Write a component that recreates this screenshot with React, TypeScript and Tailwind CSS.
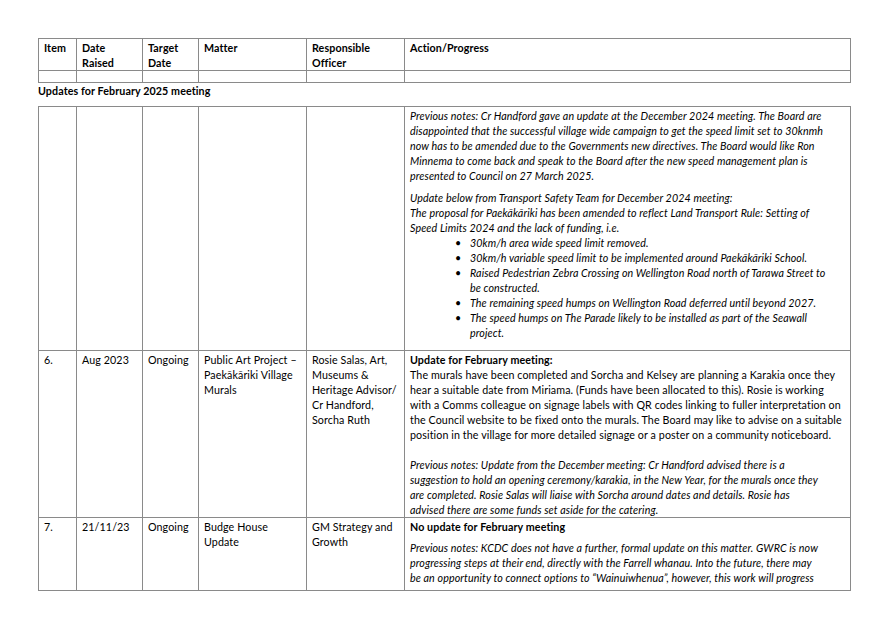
import React from "react";

const cols = ["w-[38px]", "w-[66px]", "w-[56px]", "w-[108px]", "w-[98px]", "w-[446px]"];
const td = "border border-[#8a8a8a] align-top px-[5px] pt-[1px]";

function L({ lines }: { lines: string[] }) {
  return <>{lines.map((l, i) => <React.Fragment key={i}>{i > 0 && <br />}{l}</React.Fragment>)}</>;
}

function Bullets({ items }: { items: string[][] }) {
  return (
    <ul className="pl-[60px]">
      {items.map((t, i) => (
        <li key={i} className="relative">
          <span className="absolute left-[-15px] not-italic">•</span>
          <L lines={t} />
        </li>
      ))}
    </ul>
  );
}

export default function App() {
  return (
    <div className="bg-white w-[887px] h-[626px] overflow-hidden text-black text-[10.7px] leading-[15px] tracking-[0.1px]" style={{ fontFamily: "Lato, 'Open Sans', sans-serif" }}>
      <div className="pl-[38px] pt-[38px]">
        <table className="table-fixed border-collapse w-[812px]">
          <colgroup>{cols.map((c, i) => <col key={i} className={c} />)}</colgroup>
          <tbody className="font-bold">
            <tr className="h-[30px]">
              <td className={td}>Item</td>
              <td className={td}>Date<br />Raised</td>
              <td className={td}>Target<br />Date</td>
              <td className={td}>Matter</td>
              <td className={td}>Responsible<br />Officer</td>
              <td className={td}>Action/Progress</td>
            </tr>
            <tr className="h-[12px]">
              {cols.map((_, i) => <td key={i} className="border border-[#8a8a8a]"></td>)}
            </tr>
          </tbody>
        </table>
        <div className="font-bold h-[23px] leading-[16px]">Updates for February 2025 meeting</div>
        <table className="table-fixed border-collapse w-[812px]">
          <colgroup>{cols.map((c, i) => <col key={i} className={c} />)}</colgroup>
          <tbody>
            <tr className="h-[244px]">
              <td className={td}></td><td className={td}></td><td className={td}></td><td className={td}></td><td className={td}></td>
              <td className={td + " italic"}>
                <p><L lines={[
                  "Previous notes: Cr Handford gave an update at the December 2024 meeting. The Board are",
                  "disappointed that the successful village wide campaign to get the speed limit set to 30knmh",
                  "now has to be amended due to the Governments new directives. The Board would like Ron",
                  "Minnema to come back and speak to the Board after the new speed management plan is",
                  "presented to Council on 27 March 2025.",
                ]} /></p>
                <p className="mt-[7px]"><L lines={[
                  "Update below from Transport Safety Team for December 2024 meeting:",
                  "The proposal for Paekākāriki  has been amended to reflect Land Transport Rule: Setting of",
                  "Speed Limits 2024 and the lack of funding, i.e.",
                ]} /></p>
                <Bullets items={[
                  ["30km/h area wide speed limit removed."],
                  ["30km/h variable speed limit to be implemented around Paekākāriki School."],
                  ["Raised Pedestrian Zebra Crossing on Wellington Road north of Tarawa Street to", "be constructed."],
                  ["The remaining speed humps on Wellington Road deferred until beyond 2027."],
                  ["The speed humps on The Parade likely to be installed as part of the Seawall", "project."],
                ]} />
              </td>
            </tr>
            <tr className="h-[167px]">
              <td className={td}>6.</td>
              <td className={td}>Aug 2023</td>
              <td className={td}>Ongoing</td>
              <td className={td}><L lines={["Public Art Project –", "Paekākāriki Village", "Murals"]} /></td>
              <td className={td}><L lines={["Rosie Salas, Art,", "Museums &", "Heritage Advisor/", "Cr Handford,", "Sorcha Ruth"]} /></td>
              <td className={td}>
                <p className="font-bold">Update for February meeting:</p>
                <p><L lines={[
                  "The murals have been completed and Sorcha and Kelsey are planning a Karakia once they",
                  "hear a suitable date from Miriama. (Funds have been allocated to this). Rosie is working",
                  "with a Comms colleague on signage labels with QR codes linking to fuller interpretation on",
                  "the Council website to be fixed onto the murals. The Board may like to advise on a suitable",
                  "position in the village for more detailed signage or a poster on a community noticeboard.",
                ]} /></p>
                <p className="italic mt-[15px]"><L lines={[
                  "Previous notes: Update from the December meeting: Cr Handford advised there is a",
                  "suggestion to hold an opening ceremony/karakia, in the New Year, for the murals once they",
                  "are completed. Rosie Salas will liaise with Sorcha around dates and details. Rosie has",
                  "advised there are some funds set aside for the catering.",
                ]} /></p>
              </td>
            </tr>
            <tr className="h-[73px]">
              <td className={td}>7.</td>
              <td className={td}>21/11/23</td>
              <td className={td}>Ongoing</td>
              <td className={td}><L lines={["Budge House", "Update"]} /></td>
              <td className={td}><L lines={["GM Strategy and", "Growth"]} /></td>
              <td className={td}>
                <p className="font-bold">No update for February meeting</p>
                <p className="italic mt-[6px]"><L lines={[
                  "Previous notes: KCDC does not have a further, formal update on this matter. GWRC is now",
                  "progressing steps at their end, directly with the Farrell whanau. Into the future, there may",
                  "be an opportunity to connect options to “Wainuiwhenua”, however, this work will progress",
                ]} /></p>
              </td>
            </tr>
          </tbody>
        </table>
      </div>
    </div>
  );
}
